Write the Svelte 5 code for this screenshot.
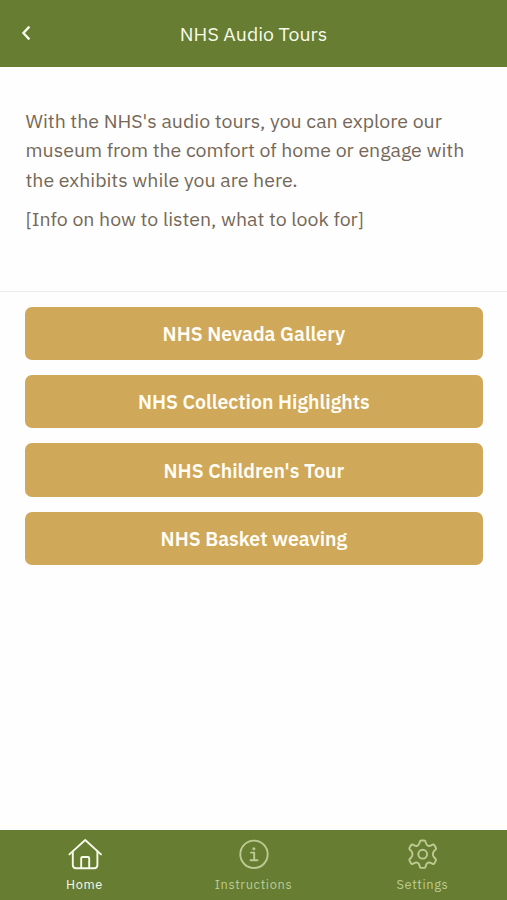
<script lang="ts">
  interface Tour {
    id: string;
    title: string;
  }

  const tours: Tour[] = [
    { id: 'gallery', title: 'NHS Nevada Gallery' },
    { id: 'highlights', title: 'NHS Collection Highlights' },
    { id: 'children', title: "NHS Children's Tour" },
    { id: 'basket', title: 'NHS Basket weaving' }
  ];

  const tabs = [
    { id: 'home', label: 'Home' },
    { id: 'instructions', label: 'Instructions' },
    { id: 'settings', label: 'Settings' }
  ];

  let activeTab = $state('home');
</script>

<div class="app">
  <header>
    <button class="back" aria-label="Back">
      <svg width="10" height="16" viewBox="0 0 10 16">
        <path d="M8.4 1.6 L2.4 8 L8.4 14.4" />
      </svg>
    </button>
    <h1>NHS Audio Tours</h1>
  </header>

  <main>
    <section class="intro">
      <p>With the NHS's audio tours, you can explore our<br />museum from the comfort of home or engage with<br />the exhibits while you are here.</p>
      <p>[Info on how to listen, what to look for]</p>
    </section>

    <section class="tours">
      {#each tours as tour (tour.id)}
        <button class="tour">{tour.title}</button>
      {/each}
    </section>
  </main>

  <nav>
    {#each tabs as tab (tab.id)}
      <button class="tab" class:active={activeTab === tab.id} onclick={() => (activeTab = tab.id)}>
        <svg width="36" height="34" viewBox="0 0 36 34">
          {#if tab.id === 'home'}
            <path d="M2.4 17.4 L18.2 3 L34 17.4" />
            <path d="M5.8 14.5 V28 Q5.8 31.2 9 31.2 H27.2 Q30.4 31.2 30.4 28 V14.5" />
            <path d="M14.2 31 V21.2 Q14.2 20 15.4 20 H21 Q22.2 20 22.2 21.2 V31" />
          {:else if tab.id === 'instructions'}
            <circle cx="18" cy="17.3" r="13.7" />
            <path d="M15 15.6 H18.2 V23 M14.5 23.2 H21.5" />
            <circle class="dot" cx="17.9" cy="11.7" r="1.5" />
          {:else}
            <path d="M16.3 3.5 H19.1 Q20.3 3.5 20.6 4.7 L21.2 6.8 Q21.7 8.2 23.2 8.8 Q24.4 9.2 25.6 8.6 L27.6 7.6 Q28.7 7.1 29.4 8.2 L30.9 10.8 Q31.4 11.9 30.5 12.7 L29.2 13.9 Q27.9 15.3 27.9 17.2 Q27.9 19.1 29.2 20.5 L30.5 21.7 Q31.4 22.5 30.9 23.6 L29.4 26.2 Q28.7 27.3 27.6 26.8 L25.6 25.8 Q24.4 25.2 23.2 25.6 Q21.7 26.2 21.2 27.6 L20.6 29.7 Q20.3 30.9 19.1 30.9 H16.3 Q15.1 30.9 14.8 29.7 L14.2 27.6 Q13.7 26.2 12.2 25.6 Q11 25.2 9.8 25.8 L7.8 26.8 Q6.7 27.3 6 26.2 L4.5 23.6 Q4 22.5 4.9 21.7 L6.2 20.5 Q7.5 19.1 7.5 17.2 Q7.5 15.3 6.2 13.9 L4.9 12.7 Q4 11.9 4.5 10.8 L6 8.2 Q6.7 7.1 7.8 7.6 L9.8 8.6 Q11 9.2 12.2 8.8 Q13.7 8.2 14.2 6.8 L14.8 4.7 Q15.1 3.5 16.3 3.5 Z" />
            <circle cx="17.7" cy="17.2" r="4.4" />
          {/if}
        </svg>
        <span>{tab.label}</span>
      </button>
    {/each}
  </nav>
</div>

<style>
  :global(body) {
    margin: 0;
    background: #ffffff;
  }

  .app {
    display: flex;
    flex-direction: column;
    height: 100vh;
    overflow: hidden;
    background: #fefefe;
    color: #756858;
    font-family: 'IBM Plex Sans', 'Noto Sans', sans-serif;
  }

  button {
    margin: 0;
    padding: 0;
    border: none;
    background: none;
    color: inherit;
    font-family: inherit;
    cursor: pointer;
  }

  svg {
    display: block;
    fill: none;
    stroke: currentColor;
    stroke-width: 1.9;
    stroke-linecap: round;
    stroke-linejoin: round;
  }

  header {
    flex: none;
    display: grid;
    grid-template-columns: 52px 1fr 52px;
    align-items: center;
    height: 66.5px;
    background: #677d31;
    color: #f7faea;
  }

  .back {
    justify-self: center;
  }

  .back svg {
    stroke-width: 2.3;
    stroke-linecap: butt;
    stroke-linejoin: miter;
  }

  h1 {
    margin: 1px 0 0;
    font-size: 19.5px;
    font-weight: 400;
    line-height: 28px;
    text-align: center;
    white-space: nowrap;
  }

  main {
    flex: 1;
  }

  .intro {
    box-sizing: border-box;
    height: 225px;
    padding: 39.4px 25px 0 25.5px;
    border-bottom: 1.5px solid #ebebeb;
  }

  p {
    margin: 0 0 9.3px;
    font-size: 19.55px;
    line-height: 29.5px;
    white-space: nowrap;
  }

  .tours {
    display: grid;
    gap: 14.8px;
    padding: 15px 24.5px 0 25.3px;
  }

  .tour {
    height: 53.6px;
    border-radius: 7px;
    background: #cfa859;
    color: #fffdf5;
    font-size: 19.53px;
    font-weight: 600;
  }

  nav {
    flex: none;
    display: grid;
    grid-template-columns: repeat(3, 1fr);
    height: 70px;
    background: #677d31;
  }

  .tab {
    display: flex;
    flex-direction: column;
    align-items: center;
    padding-top: 7px;
    color: #bdcb93;
    font-size: 12.8px;
    line-height: 18px;
    letter-spacing: 0.65px;
  }

  .tab span {
    margin-top: 5px;
  }

  .tab.active {
    color: #f7faea;
  }

  .dot {
    fill: currentColor;
    stroke: none;
  }
</style>
